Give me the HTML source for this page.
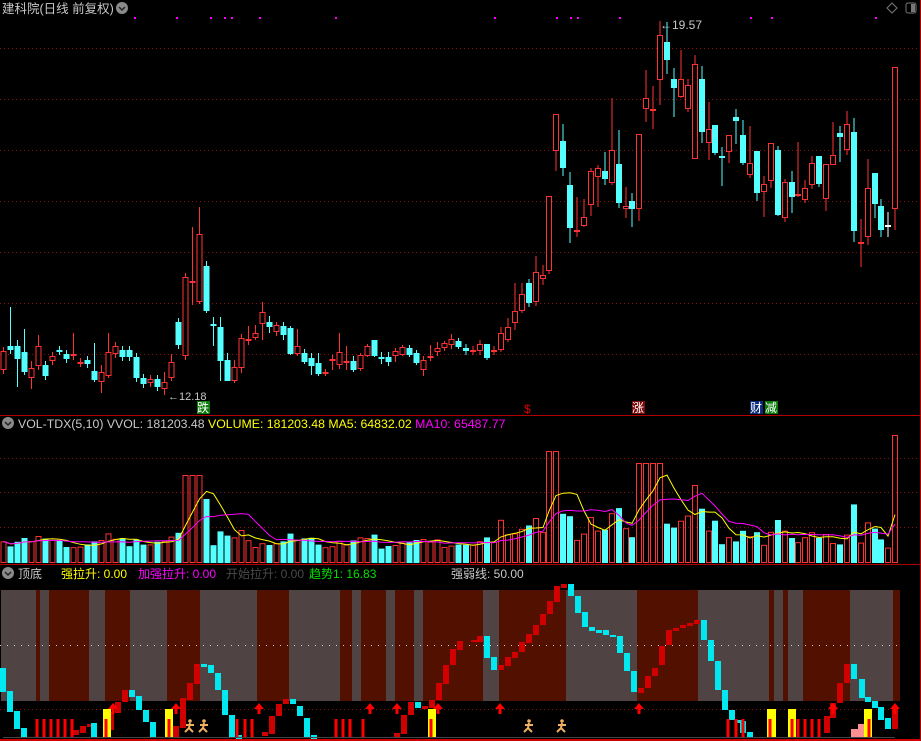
<!DOCTYPE html>
<html><head><meta charset="utf-8">
<style>
html,body{margin:0;padding:0;background:#000;width:921px;height:741px;overflow:hidden}
svg{display:block}
text{font-family:"Liberation Sans","Noto Sans CJK SC",sans-serif}
</style></head>
<body>
<svg id="s" width="921" height="741" xmlns="http://www.w3.org/2000/svg">
<rect width="921" height="741" fill="#000"/>
<g id="grid" stroke="#8a1010" stroke-dasharray="1,3" stroke-width="1"></g>
<rect x="1" y="590" width="899" height="111" fill="#4f4343"/>
<g id="bands"></g>
<line x1="0" y1="645.5" x2="900" y2="645.5" stroke="#cfcfcf" stroke-dasharray="1,6"/>
<line x1="0" y1="709.5" x2="900" y2="709.5" stroke="#8a1010" stroke-dasharray="1,3"/>
<g id="candles"></g>
<g id="vol"></g>
<g id="trend"></g>
<g id="deco"></g>
<line x1="0" y1="415.5" x2="921" y2="415.5" stroke="#b00000"/>
<line x1="0" y1="564.5" x2="921" y2="564.5" stroke="#b00000"/>
<line x1="0" y1="740" x2="921" y2="740" stroke="#d00000" stroke-width="2"/>
<line x1="920.5" y1="0" x2="920.5" y2="741" stroke="#b00000"/>
<line x1="3" y1="737.5" x2="895" y2="737.5" stroke="#444"/>
<text x="2" y="13" fill="#c8c8c8" font-size="12.5">建科院(日线 前复权)</text>
<circle cx="122" cy="8" r="6" fill="#8a8a8a"/><path d="M119 7l3 3 3-3" stroke="#222" fill="none" stroke-width="1.5"/>
<path d="M892 3l5 5-5 5-5-5z" stroke="#777" fill="none"/>
<rect x="906" y="3" width="10" height="10" rx="2" stroke="#777" fill="none"/><rect x="911" y="4" width="4" height="8" fill="#777"/>
<text x="168" y="400" fill="#c8c8c8" font-size="11">←12.18</text>
<rect x="197" y="401" width="13" height="13" fill="#0a7a0a"/><text x="197" y="412" fill="#fff" font-size="12">跌</text>
<text x="524" y="413" fill="#e00000" font-size="12">$</text>
<rect x="632" y="401" width="13" height="13" fill="#7a0a0a"/><text x="632" y="412" fill="#fff" font-size="12">涨</text>
<rect x="750" y="401" width="13" height="13" fill="#0a2a7a"/><text x="750" y="412" fill="#fff" font-size="12">财</text>
<rect x="765" y="401" width="13" height="13" fill="#0a7a0a"/><text x="765" y="412" fill="#fff" font-size="12">减</text>
<text x="660" y="29" fill="#c8c8c8" font-size="12">←19.57</text>
<circle cx="8" cy="423" r="6" fill="#8a8a8a"/><path d="M5 422l3 3 3-3" stroke="#222" fill="none" stroke-width="1.5"/>
<text x="18" y="428" font-size="12.3" fill="#c8c8c8">VOL-TDX(5,10) VVOL: 181203.48 <tspan fill="#ffff00">VOLUME: 181203.48 MA5: 64832.02</tspan> <tspan fill="#ff00ff">MA10: 65487.77</tspan></text>
<circle cx="8" cy="573" r="6" fill="#8a8a8a"/><path d="M5 572l3 3 3-3" stroke="#222" fill="none" stroke-width="1.5"/>
<text x="18" y="578" font-size="12" fill="#c8c8c8">顶底</text>
<text x="61" y="578" font-size="12" fill="#ffff00">强拉升: 0.00</text>
<text x="138" y="578" font-size="12" fill="#ff00ff">加强拉升: 0.00</text>
<text x="226" y="578" font-size="12" fill="#4a4a4a">开始拉升: 0.00</text>
<text x="309" y="578" font-size="12" fill="#00e000">趋势1: 16.83</text>
<text x="451" y="578" font-size="12" fill="#c8c8c8">强弱线: 50.00</text>
</svg>
<script>
const NS="http://www.w3.org/2000/svg";
function el(p,t,a){const e=document.createElementNS(NS,t);for(const k in a)e.setAttribute(k,a[k]);document.getElementById(p).appendChild(e);return e;}
[48.5,99.5,150.5,201.5,252.5,303.5,354.5,458.5,492.5,527.5].forEach(y=>el('grid','line',{x1:0,x2:921,y1:y,y2:y}));
[134,176,210,224,231,259,335,494,556,570,577,619,750,771,875].forEach(x=>el('deco','rect',{x:x,y:17,width:2,height:2,fill:'#ff00ff'}));
const reds=[[36,40],[49,89],[105,130],[167,200],[257,289],[340,352],[361,386],[395,414],[423,483],[499,566],[637,698],[769,774],[783,788],[803,850],[893,900]];
reds.forEach(r=>el('bands','rect',{x:r[0],y:590,width:r[1]-r[0],height:111,fill:'#521000'}));
const C=[[3.5,351,370,'r'],[10.5,346,350,'c',307,354],[17.5,346,359,'c',340,387],[24.5,352,372,'c',329,375],[31.5,368,378,'r',361,389],[38.5,346,366,'r',335,370],[45.5,365,376,'c'],[52.5,356,361,'r'],[59.5,350,351,'c'],[66.5,354,359,'c'],[73.5,354,356,'r',333,360],[80.5,362,363,'r'],[87.5,360,364,'c'],[94.5,371,380,'c',343,382],[101.5,372,382,'r',365,393],[108.5,352,376,'r',333,378],[115.5,346,354,'r'],[122.5,350,357,'c'],[129.5,350,357,'c'],[136.5,357,378,'c'],[143.5,378,384,'c'],[150.5,379,383,'r'],[157.5,379,387,'c'],[164.5,382,389,'r',372,395],[171.5,362,378,'r',354,381],[178.5,322,345,'c'],[185.5,277,356,'r'],[192.5,281,283,'r',227,305],[199.5,234,302,'r',207,304],[206.5,266,311,'c',261,313],[213.5,324,326,'c',317,346],[220.5,327,361,'c',317,381],[227.5,360,381,'c',353,381],[234.5,367,381,'r',360,383],[241.5,338,368,'r',334,373],[248.5,339,341,'r',326,345],[255.5,333,338,'r',325,340],[262.5,312,324,'r',302,340],[269.5,322,327,'c',316,333],[276.5,325,332,'r',322,336],[283.5,326,335,'c',322,340],[290.5,328,354,'c',326,355],[297.5,346,354,'r',329,356],[304.5,353,362,'c',349,364],[311.5,358,366,'c',353,375],[318.5,363,374,'c',353,376],[325.5,372,374,'r',369,376],[332.5,359,361,'r',355,370],[339.5,352,365,'r',333,369],[346.5,361,362,'r',346,370],[353.5,361,370,'c',356,372],[360.5,355,369,'r',353,371],[367.5,346,356,'r',344,357],[374.5,340,356,'c',343,357],[381.5,357,358,'c',352,364],[388.5,357,362,'c',352,366],[395.5,351,356,'r',348,362],[402.5,347,355,'r',345,356],[409.5,348,355,'c',345,357],[416.5,353,363,'c',350,365],[423.5,360,370,'r',356,376],[430.5,356,357,'r',345,361],[437.5,348,352,'r',342,356],[444.5,343,348,'r',341,351],[451.5,339,345,'r',334,349],[458.5,341,347,'c',338,349],
[466,348,351,'c'],[473,350,351,'r'],[480,344,351,'r'],[487,344,358,'c',344,360],[494,350,351,'r'],[501,333,350,'r',327,352],[508,327,340,'r',318,342],[515,311,323,'r',283,330],[522,294,311,'r',283,313],[529,283,303,'c'],[536,272,302,'r',256,306],[543,275,279,'r',265,285],[549,196,271,'r',196,274],[556,114,151,'r',114,171],[563,141,168,'c',124,176],[570,185,228,'c',172,243],[577,230,231,'r',197,237],[584,217,226,'r',199,227],[591,171,205,'r',168,216],[598,168,177,'r',165,207],[605,171,179,'c',152,185],[612,150,183,'r',98,185],[619,164,203,'c',130,208],[626,206,209,'r',187,218],[632,201,209,'c',193,227],[639,134,209,'r',134,221],[646,98,109,'r',70,122],[653,109,110,'r',86,129],[660,35,80,'r',21,105],[667,42,60,'c',22,74],[674,79,88,'c',68,117],[681,79,97,'r',50,98],[688,85,109,'r',79,112],[695,64,159,'r',55,159],[702,79,132,'c',66,143],[709,129,143,'r',102,160],[715,125,153,'c',125,155],[722,156,158,'c',147,186],[729,135,152,'r',135,163],[736,117,121,'c',109,144],[743,135,163,'c',120,165],[750,163,175,'r',126,178],[757,151,193,'c',151,201],[764,184,192,'r',176,217],[771,143,181,'r',143,188],[778,150,215,'c',146,216],[785,182,218,'r',179,222],[792,182,197,'c',171,213],[798,194,196,'r',142,197],[805,188,200,'r',180,203],[812,163,185,'r',156,189],[819,156,184,'c',156,187],[826,164,199,'r',164,211],[833,155,165,'r',122,165],[840,133,137,'c',126,162],[847,124,150,'r',111,155],[854,132,231,'c',118,242],[861,242,243,'r',219,267],[868,188,237,'r',159,245],[875,173,204,'c',173,218],[881,206,230,'c',199,237],[888,225,226,'w',212,237],[895,67,209,'r',67,230]];
const vols=[];
C.forEach((c,i)=>{
  const [x,t,b,col]=c;const hi=c[4]!==undefined?c[4]:t-4,lo=c[5]!==undefined?c[5]:b+4;
  const color=col==='r'?'#ff3232':col==='c'?'#54ffff':'#ffffff';
  el('candles','line',{x1:x,x2:x,y1:hi,y2:lo,stroke:color});
  if(col==='r'&&b-t>2) el('candles','rect',{x:x-2.5,y:t+.5,width:5,height:b-t-1,fill:'#000',stroke:color});
  else el('candles','rect',{x:x-3,y:t,width:6,height:Math.max(2,b-t),fill:color});
  let h=14+(b-t)*0.4+((i*37)%9);
  if(x>500&&x<720)h*=1.5;
  if(x>180&&x<200)h=88; if(x>204&&x<208)h=64; if(x>545&&x<560)h=112; if(x>636&&x<662)h=100;if(x>890)h=128;
  h=Math.min(h,128); vols.push(h);
  const vc=col==='c'?'#54ffff':'#ff3232';
  if(col==='c') el('vol','rect',{x:x-3,y:563-h,width:6,height:h,fill:vc});
  else el('vol','rect',{x:x-2.5,y:563.5-h,width:5,height:h-1,fill:'none',stroke:vc});
});
function ma(n,color){let p='';C.forEach((c,i)=>{let s=0,k=0;for(let j=Math.max(0,i-n+1);j<=i;j++){s+=vols[j];k++;}p+=(i?'L':'M')+c[0]+' '+(563-s/k).toFixed(1);});el('vol','path',{d:p,fill:'none',stroke:color,'stroke-width':1});}
ma(5,'#ffff00');ma(10,'#ff00ff');
const T=[[3,668,692,'c'],[10,691,712,'c'],[17,711,729,'c'],[24,728,738,'c'],[76,730,735,'r'],[83,726,733,'r'],[90,724,727,'r'],[94,723,738,'c'],[111,712,730,'r'],[118,702,713,'r'],[125,690,702,'r'],[132,690,697,'c'],[139,696,710,'c'],[146,710,722,'c'],[153,722,738,'c'],[176,726,737,'r'],[183,698,728,'r'],[190,683,700,'r'],[197,664,684,'r'],[204,664,667,'c'],[211,665,673,'c'],[218,673,690,'c'],[225,690,715,'c'],[232,715,737,'c'],[239,735,740,'c'],[265,732,736,'r'],[272,716,734,'r'],[279,704,716,'r'],[286,699,704,'r'],[293,699,704,'c'],[300,706,716,'c'],[307,718,737,'c'],[314,735,740,'c'],[397,733,737,'r'],[404,715,734,'r'],[411,702,715,'r'],[418,702,708,'c'],[425,706,709,'r'],[432,700,708,'r'],[439,683,700,'r'],[446,665,684,'r'],[453,649,665,'r'],[460,641,650,'r'],[474,640,642,'r'],[480,636,642,'r'],[487,636,658,'c'],[494,657,670,'c'],[501,665,670,'r'],[508,657,666,'r'],[515,652,658,'r'],[522,642,652,'r'],[529,634,643,'r'],[536,625,635,'r'],[543,614,625,'r'],[550,601,614,'r'],[557,586,602,'r'],[564,584,588,'r'],[571,584,596,'c'],[578,596,613,'c'],[585,612,627,'c'],[592,627,631,'c'],[599,630,633,'c'],[606,630,635,'c'],[613,635,637,'c'],[620,636,653,'c'],[627,653,671,'c'],[634,671,692,'c'],[641,688,693,'r'],[648,676,688,'r'],[655,668,676,'r'],[662,646,665,'r'],[669,630,645,'r'],[676,628,631,'r'],[683,625,628,'r'],[690,623,626,'r'],[697,620,624,'r'],[704,620,640,'c'],[711,640,661,'c'],[718,661,690,'c'],[725,690,710,'c'],[732,710,720,'c'],[739,720,723,'c'],[743,721,733,'c'],[750,732,738,'c'],[827,716,733,'r'],[833,703,718,'r'],[840,683,703,'r'],[847,664,683,'r'],[854,664,679,'c'],[862,679,698,'c'],[868,697,702,'c'],[875,701,708,'c'],[881,707,720,'c'],[888,718,729,'c'],[895,708,729,'r']];
T.forEach(t=>el('trend','rect',{x:t[0]-3,y:t[1],width:6,height:Math.max(2,t[2]-t[1]),fill:t[3]==='r'?'#d00000':'#00e8f0'}));
[[103,111],[165,173],[428,436],[767,776],[788,796],[864,872]].forEach(b=>el('deco','rect',{x:b[0],y:709,width:b[1]-b[0],height:28,fill:'#ffff00'}));
[37,44,51,58,65,72,106,169,237,245,252,336,343,350,363,431,728,736,743,770,792,798,805,812,819,869].forEach(x=>el('deco','rect',{x:x-1.5,y:719,width:3,height:18,fill:'#ff0000'}));
el('deco','rect',{x:851,y:729,width:7,height:8,fill:'#ff9090'});el('deco','rect',{x:858,y:724,width:6,height:13,fill:'#ff9090'});
[113,176,259,370,397,438,500,639,833,895].forEach(x=>el('deco','path',{d:`M${x-5} 709l5-6 5 6h-3.5v5h-3v-5z`,fill:'#ff0000'}));
[190,204,529,562].forEach(x=>{el('deco','circle',{cx:x,cy:721,r:1.8,fill:'#f0b060'});el('deco','path',{d:`M${x} 723l-1 5-4 4M${x-1} 728l4 4M${x-4} 725h8`,stroke:'#f0b060','stroke-width':2,fill:'none'});});
</script>
</body></html>
